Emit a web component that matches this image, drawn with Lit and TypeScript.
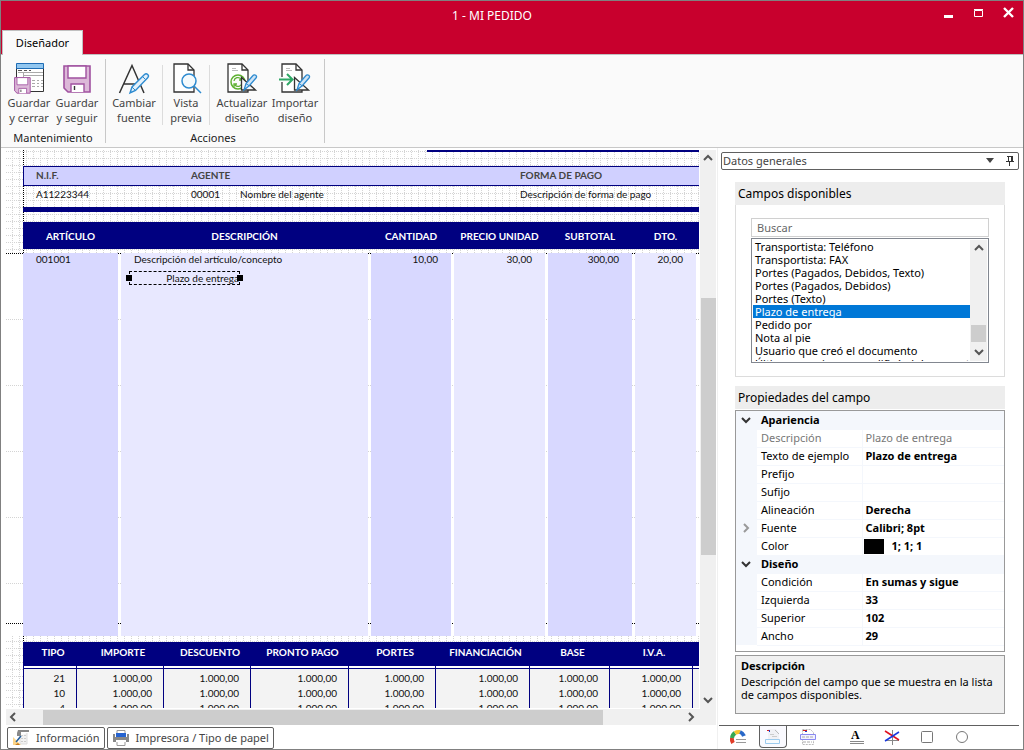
import { LitElement, html, css, svg, TemplateResult } from "lit";
import { customElement, state } from "lit/decorators.js";

const disk = (x: number, y: number, s: number) => svg`
  <g transform="translate(${x} ${y}) scale(${s})">
    <path d="M1 1h26v26H5l-4-4z" fill="#dcb8d8" stroke="#a052a0" stroke-width="1.6"/>
    <path d="M5 1h18v12H5z" fill="#fff" stroke="#a052a0" stroke-width="1.4"/>
    <path d="M8 27v-8h13v8" fill="#fff" stroke="#a052a0" stroke-width="1.4"/>
    <path d="M11.5 21v4" stroke="#333" stroke-width="1.4"/>
  </g>`;

const pen = svg`
  <path d="M15.5 14.5v12.5h14z" fill="#fafafa" stroke="#333" stroke-width="1.3"/>
  <path d="M18 27l2-6.5L27 12.5a1.8 1.8 0 0 1 3 2.5L23.5 22.5z" fill="#cfe4f6" stroke="#2e8bd0" stroke-width="1.3"/>
  <path d="M20 20.5l3.5 2.5" stroke="#2e8bd0"/>`;

const sheet = svg`<path d="M1 1h14l6 6v22H1z" fill="#fff" stroke="#333" stroke-width="1.3"/>
  <path d="M15 1v6h6" fill="none" stroke="#333" stroke-width="1.3"/>`;

const icons: Record<string, TemplateResult> = {
  saveClose: html`<svg width="32" height="32" viewBox="0 0 32 32">
    <path d="M3.5 2.5h27v26h-27z" fill="#fff" stroke="#333"/>
    <path d="M3.5 0.5h27v5h-27z" fill="#92c7f0" stroke="#1f6db5"/>
    <path d="M5 7.5h4m2 0h3m2 0h2" stroke="#555"/>
    <path d="M5 9.5h25M10.5 10v4M11 12.5h19" stroke="#aaa"/>
    <path d="M19 17.5h3m2 0h2m2 0h2M19 20.5h3m2 0h2m2 0h2M19 23.5h3m2 0h2m2 0h2" stroke="#aaa"/>
    ${disk(1, 14, 0.6)}</svg>`,
  save: html`<svg width="32" height="32" viewBox="0 0 32 32">${disk(2, 2, 1)}</svg>`,
  font: html`<svg width="32" height="32" viewBox="0 0 32 32" fill="none">
    <path d="M1.5 30L14 2.5 26 30M6 21h14" stroke="#333" stroke-width="1.5"/>
    <path d="M12 30l2-6L26.5 11.5a2.2 2.2 0 0 1 3.2 3.2L17.5 27.5z" fill="#e3f0fa" stroke="#2e8bd0" stroke-width="1.4"/>
    <path d="M14 24l3.5 3.5M24.5 13.5l3 3" stroke="#2e8bd0"/></svg>`,
  preview: html`<svg width="32" height="32" viewBox="0 0 32 32">
    <g transform="translate(3 0)">${sheet}</g>
    <circle cx="19" cy="18" r="7" fill="#f4fafd" stroke="#2e8bd0" stroke-width="1.5"/>
    <path d="M24 23l7 7" stroke="#2e8bd0" stroke-width="1.5"/></svg>`,
  update: html`<svg width="32" height="32" viewBox="0 0 32 32" fill="none">
    <g transform="translate(1 0)">${sheet}</g>
    <path d="M6 5.5h4M6 7.5h6" stroke="#bbb"/>
    <circle cx="12" cy="19" r="7" fill="#fafafa" stroke="#5db030" stroke-width="1.5"/>
    <path d="M8 18a4 4 0 0 1 7-2m1-2v3h-3M16 20a4 4 0 0 1-7 2m-1 2v-3h3" stroke="#5db030" stroke-width="1.3"/>
    ${pen}</svg>`,
  import: html`<svg width="32" height="32" viewBox="0 0 32 32" fill="none">
    <g transform="translate(2 0)">${sheet}</g>
    <path d="M7 5.5h4M7 7.5h6" stroke="#bbb"/>
    <path d="M0 16.5h13" stroke="#fafafa" stroke-width="5"/>
    <path d="M0 16.5h13M8 11l5.5 5.5L8 22" stroke="#2fa866" stroke-width="2"/>
    ${pen}</svg>`,
  info: html`<svg width="18" height="18" viewBox="0 0 18 18" fill="none">
    <path d="M6 1h11v2H9v4H5V4z" fill="#888"/>
    <path d="M8 7v8h7V4" fill="#f2f2f2" stroke="#ddd"/>
    <path d="M9 6.5h5M9 9.5h5M9 12.5h5" stroke="#ccc" stroke-dasharray="2 1"/>
    <path d="M1 8v8h8z" fill="#fbd58a"/><path d="M3 16h5l-2-2z" fill="#c67a1c"/>
    <path d="M4 13l5-6" stroke="#245f9c" stroke-width="1.5"/></svg>`,
  printer: html`<svg width="18" height="18" viewBox="0 0 18 18" fill="none">
    <path d="M5 4V1.5h8V4M5 13v3.5h8V13" fill="#fff" stroke="#999"/>
    <path d="M1 5h2v3h12V5h2v8h-3v-2H4v2H1z" fill="#888"/>
    <path d="M4 4h10v4H4z" fill="#2563d0"/></svg>`,
  gauge: html`<svg width="18" height="18" viewBox="0 0 18 18" fill="none" stroke-width="4">
    <path d="M4 15a7 7 0 0 1-1-5" stroke="#e03c28"/><path d="M3 10a7 7 0 0 1 3-5" stroke="#35a853"/>
    <path d="M6 5a7 7 0 0 1 5-1" stroke="#f7c52d"/><path d="M11 4a7 7 0 0 1 4 4" stroke="#2868c8"/>
    <path d="M6 9h12v8H6z" fill="#fff"/>
    <path d="M7 11.5h10M7 14.5h10" stroke="#999" stroke-width="1"/></svg>`,
  page: html`<svg width="18" height="18" viewBox="0 0 18 18" fill="none">
    <path d="M4 1h8l3 4v11H4z" fill="#f1f1f5"/><path d="M11 2l4 4" stroke="#bbb"/>
    <path d="M3 2h2v1H3z" fill="#d02020"/><path d="M5 2h1v2H5z" fill="#2040d0"/>
    <path d="M8 8.5h5M6 6.5h4" stroke="#ccc"/>
    <path d="M1.5 11.5h14v4h-14z" fill="#f6fafe" stroke="#9ccbee"/></svg>`,
  bands: html`<svg width="18" height="18" viewBox="0 0 18 18" fill="none">
    <path d="M3.5 1.5h8l3 3v12h-11z" fill="#fff" stroke="#bbb" stroke-dasharray="2 1"/>
    <path d="M4 2h4v1H4z" fill="#d02020"/><path d="M6 3h2v1H6z" fill="#2040d0"/>
    <path d="M1.5 6.5h15v5h-15z" fill="#f1f1ff" stroke="#8a8af0"/>
    <path d="M3 9h11M4 14h9" stroke="#aaa" stroke-dasharray="3 1"/></svg>`,
  cross: html`<svg width="18" height="18" viewBox="0 0 18 18" fill="none">
    <path d="M9.5 2v15M2 12.5h14" stroke="#888"/><path d="M2 3l14 9" stroke="#e01020" stroke-width="1.5"/>
    <path d="M2 13L16 4" stroke="#1838e0" stroke-width="1.5"/></svg>`,
  square: html`<svg width="18" height="18" viewBox="0 0 18 18"><rect x="3.5" y="3.5" width="11" height="11" rx="1" fill="none" stroke="#777"/></svg>`,
  circle: html`<svg width="18" height="18" viewBox="0 0 18 18"><circle cx="9" cy="9" r="5.5" fill="none" stroke="#777"/></svg>`,
};

const chevron = (dir: "up" | "down" | "left" | "right", color = "#555") => {
  const d = { up: "M2 7l4-4 4 4", down: "M2 4l4 4 4-4", left: "M8 2L4 6l4 4", right: "M4 2l4 4-4 4" }[dir];
  return html`<svg width="12" height="12" viewBox="0 0 12 12" fill="none" aria-hidden="true"><path d=${d} stroke=${color} stroke-width="2"/></svg>`;
};

@customElement("app-root")
export class AppRoot extends LitElement {
  @state() private selected = "Plazo de entrega";

  private fields = [
    "Transportista: Teléfono", "Transportista: FAX", "Portes (Pagados, Debidos, Texto)",
    "Portes (Pagados, Debidos)", "Portes (Texto)", "Plazo de entrega", "Pedido por",
    "Nota al pie", "Usuario que creó el documento", "Último usuario que modificó el documento",
  ];

  static styles = css`
    * { box-sizing: border-box; }
    :host {
      display: flex; flex-direction: column; box-sizing: border-box; height: 100vh; min-height: 600px; overflow: hidden;
      border: 1px solid #808080; background: #fff; color: #000;
      font: 11px/14px "Noto Sans", "Open Sans", sans-serif;
    }
    button, input, select { font: inherit; color: inherit; margin: 0; padding: 0; border: 0; background: none; border-radius: 0; }
    svg { display: block; flex: none; }

    .top { background: #c8002d; display: grid; grid-template-columns: 1fr auto 1fr; height: 53px; flex: none; color: #fff; }
    .title { font-size: 12px; font-weight: 400; margin: 0; padding: 8px 40px 0 0; }
    .tabs { align-self: end; padding-left: 1px; height: 24px; }
    .tab { height: 25px; width: 81px; background: #fafafa; color: #000; border: 1px solid #c0c0c0; border-bottom: 0; position: relative; }
    .win { display: flex; justify-content: flex-end; gap: 14px; padding: 4px 6px 0 0; }
    .win button { width: 16px; height: 16px; }

    .ribbon { flex: none; height: 94px; background: #fafafa; border-top: 1px solid #c0c0c0; border-bottom: 1px solid #c8c8c8; display: flex; padding: 4px 0 4px 4px; }
    .group { display: flex; flex-direction: column; justify-content: space-between; align-items: center; border-right: 1px solid #c8c8c8; padding: 4px 4px 0 0; }
    .tools { display: flex; height: 64px; }
    .tool { display: flex; flex-direction: column; align-items: center; color: #444; width: 48px; line-height: 15px; }
    .tool span { white-space: pre-line; }
    .wide { width: 56px; }
    .slim { width: 46px; }
    .mid { width: 50px; }
    .sep { border-left: 1px solid #dcdcdc; margin: 2px 0; }
    .sep.last { margin-right: 4px; }
    .name { color: #222; line-height: 10px; }

    .main { flex: 1; display: flex; min-height: 0; }
    .left { flex: 1; min-width: 0; display: flex; flex-direction: column; padding: 2px 0 0 5px; }
    .view { flex: 1; min-height: 0; display: grid; grid-template: minmax(0, 1fr) 16px / minmax(0, 1fr) 17px; }
    .canvas { overflow: hidden; margin: 0 1px 1px 0; }
    .bar { background: #f0f0f0; display: flex; justify-content: space-between; align-items: center; color: #555; }
    .vbar { flex-direction: column; padding: 3px 0 19px; margin-right: 1px; grid-row: span 2; }
    .hbar { padding: 0 3px 0 1px; }
    .vthumb { width: 15px; flex: 0 1 257px; margin-top: 133px; background: #cdcdcd; margin-bottom: auto; }
    .hthumb { height: 15px; flex: 0 1 560px; margin: 0 auto 0 24px; background: #cdcdcd; }

    .doc {
      font: 10px/14px Lato, Carlito, sans-serif; width: 760px; padding-left: 17px; color: #111;
      background:
        conic-gradient(at 1px 1px, transparent 75%, #000 0) 17px 0 / 760px 2px,
        conic-gradient(at 1px 1px, transparent 75%, #d4d4d4 0) 6px 0 / 7px 2px,
        conic-gradient(at 1px 1px, transparent 75%, #d4d4d4 0) 0 1px / 2px 7px;
    }
    .rule { height: 2px; background: navy; margin-left: 404px; }
    .strip { display: grid; grid-template-columns: 155px 49px 280px 1fr; padding-left: 13px; }
    .heads { margin-top: 14px; height: 20px; border: 1px solid navy; padding: 1px 0 0 12px; background: #d0d0ff; color: #444; font-weight: 700; }
    .vals { height: 21px; padding-top: 1px; }
    .thick { height: 5px; background: navy; }
    .cols { display: grid; grid-template-columns: 95px 247px 80px 91px 84px 61px; column-gap: 3px; }
    .heads2 { margin-top: 10px; height: 27px; background: navy; color: #fff; font-weight: 700; text-align: center; align-items: center; }
    .body {
      margin: 4px 0 0 -17px; height: 383px; padding-left: 17px;
      background:
        conic-gradient(at 1px 1px, transparent 75%, #000 0) 0 0 / 2px 370px,
        conic-gradient(at 1px 1px, transparent 75%, #d4d4d4 0) 0 0 / 2px 66px,
        #fff;
    }
    .col { background: #e8e8ff; padding: 0 13px; text-align: right; line-height: 12px; }
    .odd { background: #d8d8ff; }
    .txt { text-align: left; }
    .picked { position: relative; width: 111px; height: 14px; margin: 6px 0 0 -5px; border: 1px dashed #000; text-align: right; }
    .picked::before, .picked::after { content: ""; position: absolute; top: 3px; width: 6px; height: 6px; background: #000; }
    .picked::before { left: -4px; }
    .picked::after { right: -4px; }
    .sums { border-collapse: collapse; table-layout: fixed; width: 743px; margin-top: 6px; background: #f3f3f3; }
    .sums th { background: navy; color: #fff; height: 24px; padding: 0 0 4px 6px; border: 0 solid navy; border-width: 0 1px; }
    .sums td { border: 0 solid navy; border-width: 0 1px; height: 15px; padding: 0 11px 0 0; text-align: right; line-height: 15px; }
    .sums .gap td { height: 2px; background: #fff; padding: 0; }
    .sums .pad td { height: 3px; padding: 0; border-top-width: 1px; }

    .foot { display: flex; gap: 2px; padding: 2px 0 0 1px; height: 24px; }
    .foot button { display: flex; align-items: center; gap: 6px; border: 1px solid #606060; border-radius: 2px; padding: 0 4px; color: #444; }

    .right { width: 306px; flex: none; border-left: 1px solid #f0f0f0; padding: 4px 4px 0 3px; display: flex; flex-direction: column; }
    .combo { display: flex; align-items: center; border: 1px solid #606060; border-radius: 2px; height: 18px; flex: none; padding-right: 3px; gap: 10px; color: #444; }
    .combo select { flex: 1; appearance: none; padding-left: 1px; }
    .panels { flex: 1; min-height: 0; padding: 12px 14px 0 14px; display: flex; flex-direction: column; }
    .head { background: #ededed; font-size: 12px; font-weight: 400; line-height: 23px; height: 23px; padding-left: 3px; margin: 0; flex: none; }
    .box { border: 1px solid #dcdcdc; border-top: 0; padding: 13px 15px; margin-bottom: 9px; }
    .search { display: block; width: 100%; height: 19px; border: 1px solid #d0d0d0; padding-left: 5px; }
    .search::placeholder { color: #666; opacity: 1; }
    .list { display: flex; border: 1px solid #828790; margin-top: 1px; height: 125px; padding: 1px; }
    .items { flex: 1; min-width: 0; overflow: hidden; list-style: none; margin: 0; padding: 0; }
    .item { line-height: 13px; height: 13px; padding-left: 2px; white-space: nowrap; }
    .on { background: #0078d7; color: #fff; }
    .lbar { flex-direction: column; width: 17px; padding: 3px 1px; }
    .lthumb { width: 15px; height: 17px; background: #cdcdcd; margin-top: auto; margin-bottom: 4px; }
    .props { border: 1px solid #999; margin-top: 1px; flex: none; height: 242px; overflow: hidden; }
    .grid { width: 100%; border-collapse: collapse; table-layout: fixed; }
    .grid th { text-align: left; font-weight: 400; }
    .grid th, .grid td { height: 18px; padding: 0 0 0 4px; border-bottom: 1px solid #f4f7fc; }
    .grid td { border-left: 1px solid #f4f7fc; font-weight: 700; padding-left: 3px; }
    .grid .mark { background: #f4f7fc; border: 0; padding: 0 0 0 4px; }
    .grid .cat { background: #f4f7fc; font-weight: 700; }
    .grid .dim { color: #777; font-weight: 400; }
    .swatch { display: flex; align-items: center; gap: 8px; margin-left: -2px; }
    .swatch i { width: 20px; height: 15px; background: #010101; }
    .help { border: 1px solid #999; background: #f0f0f0; margin-top: 3px; height: 59px; padding: 3px 5px; line-height: 13px; flex: none; }
    .help b { display: block; margin-bottom: 3px; }
    .help p { margin: 0; }
    .icons { border-top: 1px solid #606060; display: flex; height: 24px; margin-left: -2px; flex: none; padding-left: 5px; }
    .icons button { width: 28px; height: 22px; margin-right: 7px; display: flex; align-items: center; justify-content: center; }
    .icons .active { border: 1px solid #606060; border-top: 0; border-radius: 0 0 4px 4px; background: #fafaff; }
    .icons .far { margin-left: 14px; }
    .letter { font: 700 12px/11px "Liberation Serif", serif; border-bottom: 3px double #888; width: 14px; text-align: left; padding-left: 1px; }
  `;

  private tool(icon: string, label: string, size = "") {
    return html`<button class="tool ${size}">${icons[icon]}<span>${label}</span></button>`;
  }

  private row(name: string, value: unknown, mark: unknown = "", dim = false) {
    return html`<tr><td class="mark">${mark}</td><th scope="row" class=${dim ? "dim" : ""}>${name}</th><td class=${dim ? "dim" : ""}>${value}</td></tr>`;
  }

  private category(name: string) {
    return html`<tr><td class="mark">${chevron("down", "#333")}</td><th class="cat" colspan="2">${name}</th></tr>`;
  }

  private documentView() {
    const widths = [53, 87, 87, 98, 87, 94, 80, 83, 74];
    const sums = ["TIPO", "IMPORTE", "DESCUENTO", "PRONTO PAGO", "PORTES", "FINANCIACIÓN", "BASE", "I.V.A.", ""];
    return html`<div class="doc">
      <div class="rule"></div>
      <div class="strip heads"><span>N.I.F.</span><span>AGENTE</span><span></span><span>FORMA DE PAGO</span></div>
      <div class="strip vals"><span>A11223344</span><span>00001</span><span>Nombre del agente</span><span>Descripción de forma de pago</span></div>
      <div class="thick"></div>
      <div class="cols heads2"><span>ARTÍCULO</span><span>DESCRIPCIÓN</span><span>CANTIDAD</span><span>PRECIO UNIDAD</span><span>SUBTOTAL</span><span>DTO.</span></div>
      <div class="cols body">
        <div class="col odd txt">001001</div>
        <div class="col txt">Descripción del artículo/concepto<div class="picked">Plazo de entrega</div></div>
        <div class="col odd">10,00</div><div class="col">30,00</div><div class="col odd">300,00</div><div class="col">20,00</div>
      </div>
      <table class="sums">
        <colgroup>${widths.map((w) => html`<col style="width:${w}px">`)}</colgroup>
        <thead><tr>${sums.map((s) => html`<th scope="col">${s}</th>`)}</tr></thead>
        <tbody>
          <tr class="gap">${sums.map(() => html`<td></td>`)}</tr>
          <tr class="pad">${sums.map(() => html`<td></td>`)}</tr>
          ${["21", "10", "4"].map((t) => html`<tr>${sums.map((s, i) => html`<td>${i === 0 ? t : s ? "1.000,00" : ""}</td>`)}</tr>`)}
        </tbody>
      </table>
    </div>`;
  }

  render() {
    return html`
      <header class="top">
        <div class="tabs"><button class="tab">Diseñador</button></div>
        <h1 class="title">1 - MI PEDIDO</h1>
        <div class="win">
          <button aria-label="Minimizar"><svg width="16" height="16"><path d="M3 10h9v3H3z" fill="#fff"/></svg></button>
          <button aria-label="Maximizar"><svg width="16" height="16"><path d="M3.5 5.5h8v6h-8zM3 4.5h9" fill="none" stroke="#fff"/></svg></button>
          <button aria-label="Cerrar"><svg width="16" height="16"><path d="M3 3l9 9M12 3l-9 9" stroke="#fff" stroke-width="2.4"/></svg></button>
        </div>
      </header>
      <nav class="ribbon">
        <div class="group">
          <div class="tools">${this.tool("saveClose", "Guardar\ny cerrar")}${this.tool("save", "Guardar\ny seguir")}</div>
          <div class="name">Mantenimiento</div>
        </div>
        <div class="group">
          <div class="tools">
            ${this.tool("font", "Cambiar\nfuente", "wide")}<div class="sep"></div>
            ${this.tool("preview", "Vista\nprevia", "slim")}<div class="sep last"></div>
            ${this.tool("update", "Actualizar\ndiseño", "wide")}${this.tool("import", "Importar\ndiseño", "mid")}
          </div>
          <div class="name">Acciones</div>
        </div>
      </nav>
      <main class="main">
        <section class="left">
          <div class="view">
            <div class="canvas">${this.documentView()}</div>
            <div class="bar vbar">${chevron("up")}<div class="vthumb"></div>${chevron("down")}</div>
            <div class="bar hbar">${chevron("left")}<div class="hthumb"></div>${chevron("right")}</div>
          </div>
          <div class="foot"><button>${icons.info}Información</button><button>${icons.printer}Impresora / Tipo de papel</button></div>
        </section>
        <aside class="right">
          <div class="combo">
            <select aria-label="Grupo de datos"><option>Datos generales</option></select>
            <svg width="10" height="6"><path d="M1 0h8L5 5z" fill="#444"/></svg>
            <svg width="10" height="10" fill="none"><path d="M2 .5h6M3.5 .5v5M6.5 .5v5M7.5 .5v5M1 5.5h8M4.5 6v4" stroke="#333"/></svg>
          </div>
          <div class="panels">
            <h2 class="head">Campos disponibles</h2>
            <div class="box">
              <input class="search" type="text" placeholder="Buscar" aria-label="Buscar">
              <div class="list">
                <ul class="items" role="listbox" aria-label="Campos disponibles">
                  ${this.fields.map((f) => html`<li role="option" aria-selected=${f === this.selected} class="item ${f === this.selected ? "on" : ""}" @click=${() => (this.selected = f)}>${f}</li>`)}
                </ul>
                <div class="bar lbar">${chevron("up")}<div class="lthumb"></div>${chevron("down")}</div>
              </div>
            </div>
            <h2 class="head">Propiedades del campo</h2>
            <div class="props">
              <table class="grid">
                <colgroup><col style="width:21px"><col style="width:105px"><col></colgroup>
                <tbody>
                  ${this.category("Apariencia")}
                  ${this.row("Descripción", "Plazo de entrega", "", true)}
                  ${this.row("Texto de ejemplo", "Plazo de entrega")}
                  ${this.row("Prefijo", "")}
                  ${this.row("Sufijo", "")}
                  ${this.row("Alineación", "Derecha")}
                  ${this.row("Fuente", "Calibri; 8pt", chevron("right", "#999"))}
                  ${this.row("Color", html`<span class="swatch"><i></i>1; 1; 1</span>`)}
                  ${this.category("Diseño")}
                  ${this.row("Condición", "En sumas y sigue")}
                  ${this.row("Izquierda", "33")}
                  ${this.row("Superior", "102")}
                  ${this.row("Ancho", "29")}
                </tbody>
              </table>
            </div>
            <div class="help"><b>Descripción</b><p>Descripción del campo que se muestra en la lista de campos disponibles.</p></div>
          </div>
          <div class="icons">
            <button aria-label="Indicadores">${icons.gauge}</button>
            <button class="active" aria-label="Campos">${icons.page}</button>
            <button aria-label="Bandas">${icons.bands}</button>
            <button class="far" aria-label="Texto"><span class="letter">A</span></button>
            <button aria-label="Líneas">${icons.cross}</button>
            <button aria-label="Rectángulo">${icons.square}</button>
            <button aria-label="Elipse">${icons.circle}</button>
          </div>
        </aside>
      </main>`;
  }
}
